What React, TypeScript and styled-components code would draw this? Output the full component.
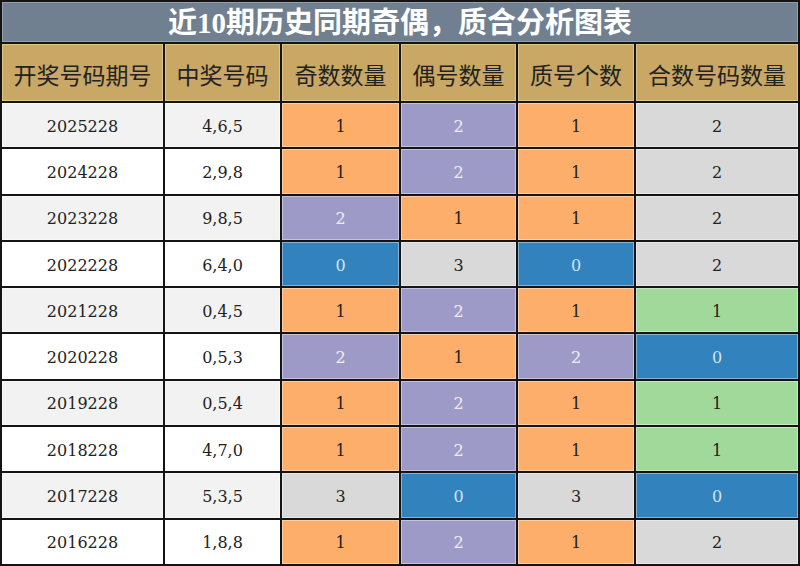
import React from "react";
import styled, { createGlobalStyle } from "styled-components";

const Global = createGlobalStyle`
  html, body { margin: 0; padding: 0; background: #ffffff; }
  #root { width: 800px; height: 566px; }
`;

type Tone = "orange" | "purple" | "gray" | "blue" | "green";

const toneBg: Record<Tone, string> = {
  orange: "#fdae6b",
  purple: "#9e9ac8",
  gray: "#d9d9d9",
  blue: "#3182bd",
  green: "#a1d99b",
};

const toneFg: Record<Tone, string> = {
  orange: "#222222",
  purple: "#eeeeee",
  gray: "#222222",
  blue: "#d6e4f0",
  green: "#222222",
};

const Sheet = styled.div`
  box-sizing: border-box;
  width: 800px;
  height: 566px;
  display: grid;
  grid-template-columns: 161px 115px 117px 115px 116px 162px;
  grid-template-rows: 40px 57px repeat(10, 1fr);
  gap: 2px;
  padding: 2px;
  background: #141414;
`;

const Title = styled.div`
  grid-column: 1 / -1;
  display: flex;
  align-items: center;
  justify-content: center;
  background: #708090;
  box-shadow: inset 0 0 0 1px rgba(255, 255, 255, 0.25);
  color: #ffffff;
  font-family: "Liberation Serif", "Noto Sans CJK SC", serif;
  font-weight: 700;
  font-size: 29px;
  line-height: 1;
  padding-top: 2px;
`;

const HeadCell = styled.div`
  display: flex;
  align-items: center;
  justify-content: center;
  background: #c9a765;
  box-shadow: inset 0 0 0 1px rgba(255, 235, 180, 0.45);
  color: #222222;
  font-family: "Noto Sans CJK SC", sans-serif;
  font-size: 23px;
  padding-top: 3px;
`;

const Cell = styled.div<{ $bg: string; $fg: string }>`
  display: flex;
  align-items: center;
  justify-content: center;
  background: ${(p) => p.$bg};
  color: ${(p) => p.$fg};
  box-shadow: inset 0 0 0 1px rgba(255, 255, 255, 0.4);
  font-family: "DejaVu Serif", "Liberation Serif", serif;
  font-size: 16px;
  padding-top: 2px;
`;

const headers = ["开奖号码期号", "中奖号码", "奇数数量", "偶号数量", "质号个数", "合数号码数量"];

type Row = [string, string, [string, Tone], [string, Tone], [string, Tone], [string, Tone]];

const rows: Row[] = [
  ["2025228", "4,6,5", ["1", "orange"], ["2", "purple"], ["1", "orange"], ["2", "gray"]],
  ["2024228", "2,9,8", ["1", "orange"], ["2", "purple"], ["1", "orange"], ["2", "gray"]],
  ["2023228", "9,8,5", ["2", "purple"], ["1", "orange"], ["1", "orange"], ["2", "gray"]],
  ["2022228", "6,4,0", ["0", "blue"], ["3", "gray"], ["0", "blue"], ["2", "gray"]],
  ["2021228", "0,4,5", ["1", "orange"], ["2", "purple"], ["1", "orange"], ["1", "green"]],
  ["2020228", "0,5,3", ["2", "purple"], ["1", "orange"], ["2", "purple"], ["0", "blue"]],
  ["2019228", "0,5,4", ["1", "orange"], ["2", "purple"], ["1", "orange"], ["1", "green"]],
  ["2018228", "4,7,0", ["1", "orange"], ["2", "purple"], ["1", "orange"], ["1", "green"]],
  ["2017228", "5,3,5", ["3", "gray"], ["0", "blue"], ["3", "gray"], ["0", "blue"]],
  ["2016228", "1,8,8", ["1", "orange"], ["2", "purple"], ["1", "orange"], ["2", "gray"]],
];

export default function App() {
  return (
    <>
      <Global />
      <Sheet>
        <Title>近10期历史同期奇偶，质合分析图表</Title>
        {headers.map((h) => (
          <HeadCell key={h}>{h}</HeadCell>
        ))}
        {rows.map((r, i) => {
          const plain = i % 2 === 0 ? "#f2f2f2" : "#ffffff";
          return (
            <React.Fragment key={r[0]}>
              <Cell $bg={plain} $fg="#222222">{r[0]}</Cell>
              <Cell $bg={plain} $fg="#222222">{r[1]}</Cell>
              {[r[2], r[3], r[4], r[5]].map(([v, t], j) => (
                <Cell key={j} $bg={toneBg[t]} $fg={toneFg[t]}>
                  {v}
                </Cell>
              ))}
            </React.Fragment>
          );
        })}
      </Sheet>
    </>
  );
}
